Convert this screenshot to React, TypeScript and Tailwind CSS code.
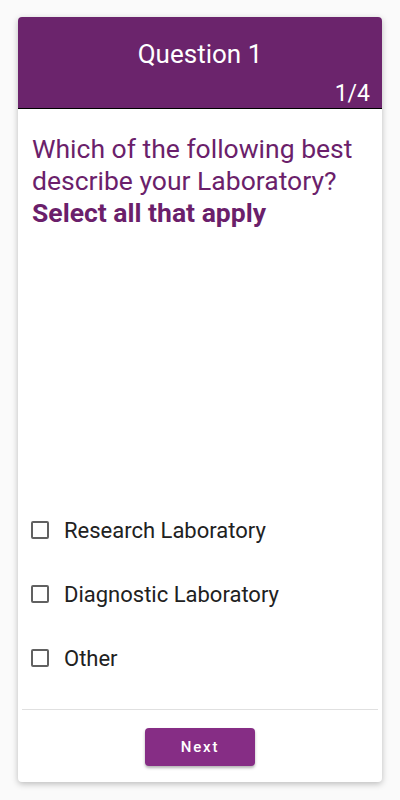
import { useState } from "react";

const OPTIONS = ["Research Laboratory", "Diagnostic Laboratory", "Other"];

const App = () => {
  const [checked, setChecked] = useState<boolean[]>([false, false, false]);

  return (
    <div
      className="h-screen bg-[#fafafa] px-[18px] pt-[17px] pb-[18px]"
      style={{ fontFamily: "Roboto, sans-serif" }}
    >
      <div className="h-full flex flex-col bg-white rounded-[4px] shadow-[0_2px_6px_rgba(0,0,0,0.25)] overflow-hidden">
        {/* header */}
        <div className="relative h-[92px] bg-[#6b246c] border-b border-black text-white">
          <div className="pt-[19px] text-center text-[26px] leading-[36px]">Question 1</div>
          <div className="absolute right-[12px] bottom-[0px] text-[23px] leading-[28px]">1/4</div>
        </div>

        {/* question */}
        <div className="px-[14px] pt-[24px] text-[26.5px] leading-[32px] text-[#6b1f6b]">
          <p>Which of the following best describe your Laboratory?</p>
          <p className="font-bold">Select all that apply</p>
        </div>

        <div className="flex-1" />

        {/* options */}
        <div className="flex flex-col pb-[19px]">
          {OPTIONS.map((label, i) => (
            <label key={label} className="h-[64px] flex items-center gap-[15px] pl-[13px] cursor-pointer">
              <input
                type="checkbox"
                checked={checked[i]}
                onChange={() => setChecked(checked.map((c, j) => (j === i ? !c : c)))}
                className="appearance-none w-[18px] h-[18px] border-2 border-[#616161] rounded-[2px] checked:bg-[#862d85] checked:border-[#862d85]"
              />
              <span className="text-[22px] text-[#212121]">{label}</span>
            </label>
          ))}
        </div>

        {/* footer */}
        <div className="mx-[4px] border-t border-[#e0e0e0] flex justify-center pt-[18px] pb-[16px]">
          <button className="w-[110px] h-[38px] rounded-[4px] bg-[#862d85] text-white text-[15px] font-medium tracking-[0.12em] shadow-[0_2px_3px_rgba(0,0,0,0.3)]">
            Next
          </button>
        </div>
      </div>
    </div>
  );
};

export default App;
